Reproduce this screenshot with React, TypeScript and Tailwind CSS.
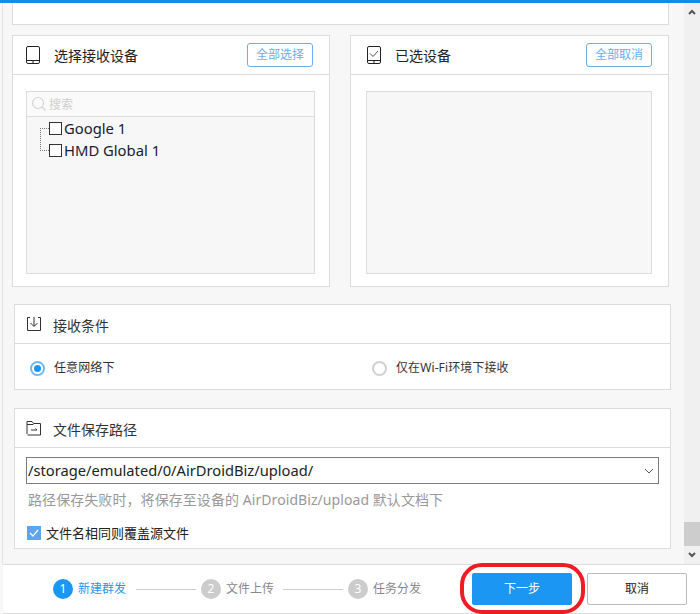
const font = { fontFamily: '"Noto Sans", "Noto Sans CJK SC", sans-serif' };

function Tablet({ checked }: { checked?: boolean }) {
  return (
    <svg width="14" height="18" viewBox="0 0 14 18" fill="none" stroke="#222" strokeWidth="1">
      <rect x="0.5" y="0.5" width="13" height="17" rx="1.5" />
      <path d="M0.5 14.5H13.5" />
      <path d="M6 16H8" />
      {checked && <path d="M3 7.5L6 10.5L11 5" stroke="#555" />}
    </svg>
  );
}

function DeviceCard({ title, action, checked, children }: { title: string; action: string; checked?: boolean; children: React.ReactNode }) {
  return (
    <div className="flex h-[252px] flex-col border border-[#dcdcdc] bg-white">
      <div className={`flex h-[39px] shrink-0 items-center border-b border-[#dcdcdc] pr-[16px] ${checked ? "pl-[16px]" : "pl-[13px]"}`}>
        <Tablet checked={checked} />
        <span className="ml-[14px] flex-1 text-[14px] text-[#222]">{title}</span>
        <button className="h-[24px] w-[66px] rounded-[3px] border border-[#69aef0] text-[12px] leading-[20px] text-[#69aef0]">{action}</button>
      </div>
      <div className={`flex min-h-0 flex-1 pb-[12px] pt-[16px] ${checked ? "pl-[15px] pr-[16px]" : "pl-[13px] pr-[14px]"}`}>{children}</div>
    </div>
  );
}

function TreeRow({ label }: { label: string }) {
  return (
    <div className="flex h-[22px] items-center">
      <span className="h-px w-[9px] border-t border-dotted border-[#777]" />
      <span className="h-[13px] w-[13px] border border-[#333] bg-white" />
      <span className="ml-[2px] text-[14.8px] leading-[22px] text-[#1a1a2e]">{label}</span>
    </div>
  );
}

function Radio({ on, label }: { on?: boolean; label: string }) {
  return (
    <div className="flex items-center gap-[9px]">
      <span className={`flex h-[15px] w-[15px] items-center justify-center rounded-full border-2 ${on ? "border-[#6db8f5]" : "border-[#cfcfcf]"}`}>
        {on && <span className="h-[7px] w-[7px] rounded-full bg-[#1c96f3]" />}
      </span>
      <span className="text-[12px] tracking-[0.1px] text-[#333]">{label}</span>
    </div>
  );
}

function Step({ n, label, active }: { n: number; label: string; active?: boolean }) {
  return (
    <div className="flex items-center gap-[5px]">
      <span className={`flex h-[20px] w-[20px] items-center justify-center rounded-full text-[12px] text-white ${active ? "bg-[#1c96f3]" : "bg-[#cccccc]"}`}>{n}</span>
      <span className={`text-[12px] ${active ? "text-[#1c96f3]" : "text-[#888]"}`}>{label}</span>
    </div>
  );
}

export default function App() {
  return (
    <div className="relative flex h-[614px] w-[700px] flex-col overflow-hidden bg-[#f7f7f7]" style={font}>
      <div className="h-[3px] shrink-0 bg-[#0f8ee9]" />
      <div className="flex min-h-0 flex-1">
        <div className="w-[684px] pl-[2px]">
          <div className="h-[561px] border-l border-[#e4e4e4] pl-[9px]">
            <div className="mr-[15px] h-[22px] border-x border-b border-[#dcdcdc] bg-white" />
            <div className="mr-[15px] mt-[10px] grid grid-cols-[318px_319px] gap-[20px]">
              <DeviceCard title="选择接收设备" action="全部选择">
                <div className="flex flex-1 flex-col border border-[#dcdcdc] bg-[#f7f7f7]">
                  <div className="flex h-[25px] shrink-0 items-center border-b border-[#dcdcdc] bg-[#fafafa] pl-[4px]">
                    <svg width="16" height="16" viewBox="0 0 16 16" fill="none" stroke="#d4d4d4" strokeWidth="1.2">
                      <circle cx="7" cy="7" r="5.5" />
                      <path d="M11 11L14.5 14.5" />
                    </svg>
                    <span className="ml-[2px] pt-[2px] text-[12px] text-[#cfcfcf]">搜索</span>
                  </div>
                  <div className="relative pl-[13px]">
                    <div className="absolute left-[13px] top-[11px] h-[23px] border-l border-dotted border-[#777]" />
                    <TreeRow label="Google 1" />
                    <TreeRow label="HMD Global 1" />
                  </div>
                </div>
              </DeviceCard>
              <DeviceCard title="已选设备" action="全部取消" checked>
                <div className="flex-1 border border-[#dcdcdc] bg-[#f7f7f7]" />
              </DeviceCard>
            </div>
            <div className="ml-[2px] mr-[13px] mt-[17px] border border-[#dcdcdc] bg-white">
              <div className="flex h-[39px] items-center border-b border-[#dcdcdc] pl-[11px]">
                <svg width="16" height="16" viewBox="0 0 16 16" fill="none" stroke="#333" strokeWidth="1">
                  <path d="M4 1.5H1.5V14.5H14.5V1.5H12" />
                  <path d="M8 1V10M4.5 7L8 10.5L11.5 7" />
                </svg>
                <span className="ml-[11px] pt-[3px] text-[14px] text-[#333]">接收条件</span>
              </div>
              <div className="flex h-[45px] items-center pl-[15px] pt-[3px]">
                <div className="w-[342px]"><Radio on label="任意网络下" /></div>
                <Radio label="仅在Wi-Fi环境下接收" />
              </div>
            </div>
            <div className="ml-[2px] mr-[13px] mt-[18px] border border-[#dcdcdc] bg-white">
              <div className="flex h-[39px] items-center border-b border-[#dcdcdc] pl-[11px]">
                <svg width="16" height="16" viewBox="0 0 16 16" fill="none" stroke="#333" strokeWidth="1">
                  <path d="M1 14V1.5H6L7.5 3.5H14.5V15H1.5" />
                  <path d="M1 4.5H7.5" />
                  <path d="M5 10H11M9.5 8.5L11 10" />
                </svg>
                <span className="ml-[11px] pt-[3px] text-[14px] text-[#333]">文件保存路径</span>
              </div>
              <div className="px-[11px] pb-[8px] pt-[9px]">
                <div className="flex h-[27px] items-center justify-between border border-[#7a7a7a] pl-[1px] pr-[4px]">
                  <span className="text-[14.7px] text-[#222]">/storage/emulated/0/AirDroidBiz/upload/</span>
                  <svg width="10" height="6" viewBox="0 0 10 6" fill="none" stroke="#555" strokeWidth="1"><path d="M1 1L5 5L9 1" /></svg>
                </div>
                <div className="mt-[7px] pl-[2px] text-[14px] leading-[18px] tracking-[0.07px] text-[#999]">路径保存失败时，将保存至设备的 AirDroidBiz/upload 默认文档下</div>
                <div className="mt-[17px] flex items-center gap-[5px] pl-px">
                  <span className="flex h-[14px] w-[14px] items-center justify-center bg-[#5ba6ee]">
                    <svg width="10" height="8" viewBox="0 0 10 8" fill="none" stroke="#fff" strokeWidth="1.2"><path d="M1 4L4 7L9 1" /></svg>
                  </span>
                  <span className="text-[13px] leading-[14px] text-[#222]">文件名相同则覆盖源文件</span>
                </div>
              </div>
            </div>
          </div>
        </div>
        <div className="flex h-[561px] w-[16px] flex-col items-center justify-between bg-[#f0f0f0]">
          <svg className="mt-[6px]" width="8" height="6" viewBox="0 0 8 6" fill="none" stroke="#555" strokeWidth="2"><path d="M1 5L4 2L7 5" /></svg>
          <div className="mt-auto h-[24px] w-full bg-[#cdcdcd]" />
          <svg className="my-[6px]" width="8" height="6" viewBox="0 0 8 6" fill="none" stroke="#555" strokeWidth="2"><path d="M1 1L4 4L7 1" /></svg>
        </div>
      </div>
      <div className="absolute bottom-0 left-[3px] right-0 flex h-[50px] items-center border-y border-[#dcdcdc] bg-white pl-[50px]">
        <Step n={1} label="新建群发" active />
        <span className="ml-[10px] mr-[5px] h-px w-[60px] bg-[#ccc]" />
        <Step n={2} label="文件上传" />
        <span className="ml-[9px] mr-[5px] h-px w-[60px] bg-[#ccc]" />
        <Step n={3} label="任务分发" />
        <button className="ml-[51px] h-[32px] w-[100px] rounded-[2px] bg-[#1c96f3] text-[12px] text-white">下一步</button>
        <button className="ml-[15px] h-[32px] w-[100px] rounded-[2px] border border-[#bbb] bg-white text-[12px] text-[#222]">取消</button>
      </div>
      <div className="absolute left-[460px] top-[563px] h-[51px] w-[125px] rounded-[22px] border-[4px] border-[#ee1c25]" />
    </div>
  );
}
